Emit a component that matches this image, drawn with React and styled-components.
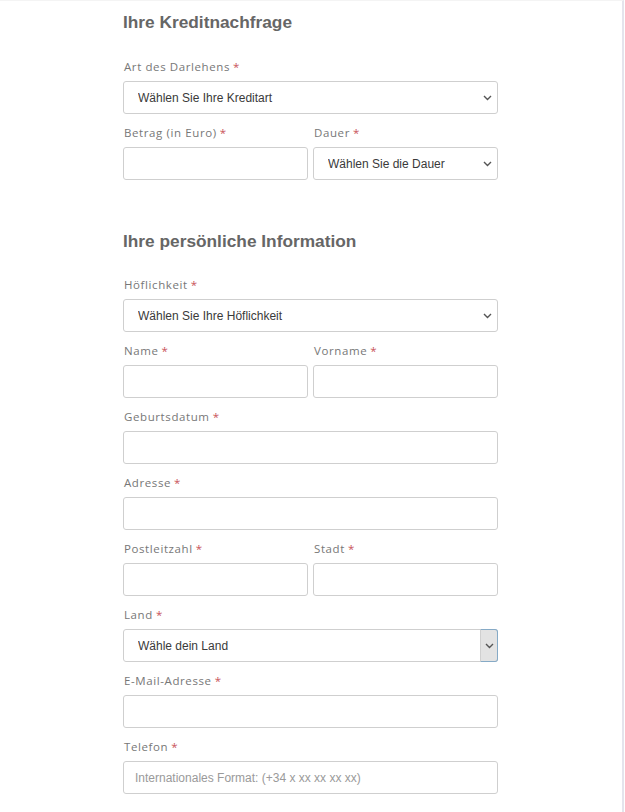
import React from "react";
import styled, { createGlobalStyle } from "styled-components";

const GlobalStyle = createGlobalStyle`
  html, body {
    margin: 0;
    padding: 0;
    background: #fff;
  }
  * { box-sizing: border-box; }
`;

const Page = styled.div`
  width: 624px;
  min-height: 812px;
  border-top: 1px solid #f4f4f4;
  border-right: 2px solid #e4e4ec;
  padding: 10px 0 0 123px;
`;

const Form = styled.form`
  width: 375px;
  display: flex;
  flex-direction: column;
`;

const Heading = styled.h2`
  font-family: "Liberation Sans", Arial, sans-serif;
  font-size: 17.3px;
  font-weight: bold;
  color: #666;
  line-height: 22px;
  margin: ${(p) => (p.$first ? "0 0 26px" : "39px 0 25px")};
`;

const Row = styled.div`
  display: grid;
  grid-template-columns: 1fr 1fr;
  gap: 5px;
`;

const Field = styled.div`
  display: flex;
  flex-direction: column;
  margin-bottom: 11px;
`;

const Label = styled.label`
  font-family: "Open Sans", sans-serif;
  font-size: 11.5px;
  letter-spacing: 0.6px;
  color: #777;
  line-height: 16px;
  margin-bottom: 6px;
  padding-left: 1px;
`;

const Star = styled.span`
  color: #c9545b;
  margin-left: 3px;
`;

const Input = styled.input`
  height: 33px;
  width: 100%;
  border: 1px solid #cfcfcf;
  border-radius: 3px;
  padding: 0 11px;
  font-family: "Liberation Sans", Arial, sans-serif;
  font-size: 12px;
  color: #333;
  outline: none;
  &::placeholder {
    color: #9a9a9a;
  }
`;

const SelectWrap = styled.div`
  position: relative;
  height: 33px;
`;

const Select = styled.select`
  appearance: none;
  height: 33px;
  width: 100%;
  border: 1px solid #cfcfcf;
  border-radius: 3px;
  background: #fff;
  padding: 0 24px 0 14px;
  font-family: "Liberation Sans", Arial, sans-serif;
  font-size: 12px;
  color: #3a3a3a;
  outline: none;
`;

const Arrow = styled.span`
  position: absolute;
  top: 0;
  right: 0;
  bottom: 0;
  width: ${(p) => (p.$active ? "18px" : "22px")};
  display: flex;
  align-items: center;
  justify-content: center;
  pointer-events: none;
  background: ${(p) => (p.$active ? "#e3e3e3" : "transparent")};
  border: ${(p) => (p.$active ? "1px solid #86aac6" : "none")};
  border-left: ${(p) => (p.$active ? "1px solid #d0d0d0" : "none")};
  border-radius: 0 3px 3px 0;
`;

function Chevron() {
  return (
    <svg width="9" height="6" viewBox="0 0 9 6">
      <path d="M1 1l3.5 3.5L8 1" fill="none" stroke="#555" strokeWidth="1.4" />
    </svg>
  );
}

function SelectField({ label, placeholder, active }) {
  return (
    <Field>
      <Label>
        {label}
        <Star>*</Star>
      </Label>
      <SelectWrap>
        <Select defaultValue="">
          <option value="">{placeholder}</option>
        </Select>
        <Arrow $active={active}>
          <Chevron />
        </Arrow>
      </SelectWrap>
    </Field>
  );
}

function TextField({ label, placeholder }) {
  return (
    <Field>
      <Label>
        {label}
        <Star>*</Star>
      </Label>
      <Input type="text" placeholder={placeholder} />
    </Field>
  );
}

export default function App() {
  return (
    <>
      <GlobalStyle />
      <Page>
        <Form>
          <Heading $first>Ihre Kreditnachfrage</Heading>
          <SelectField label="Art des Darlehens" placeholder="Wählen Sie Ihre Kreditart" />
          <Row>
            <TextField label="Betrag (in Euro)" />
            <SelectField label="Dauer" placeholder="Wählen Sie die Dauer" />
          </Row>

          <Heading>Ihre persönliche Information</Heading>
          <SelectField label="Höflichkeit" placeholder="Wählen Sie Ihre Höflichkeit" />
          <Row>
            <TextField label="Name" />
            <TextField label="Vorname" />
          </Row>
          <TextField label="Geburtsdatum" />
          <TextField label="Adresse" />
          <Row>
            <TextField label="Postleitzahl" />
            <TextField label="Stadt" />
          </Row>
          <SelectField label="Land" placeholder="Wähle dein Land" active />
          <TextField label="E-Mail-Adresse" />
          <TextField label="Telefon" placeholder="Internationales Format: (+34 x xx xx xx xx)" />
        </Form>
      </Page>
    </>
  );
}
